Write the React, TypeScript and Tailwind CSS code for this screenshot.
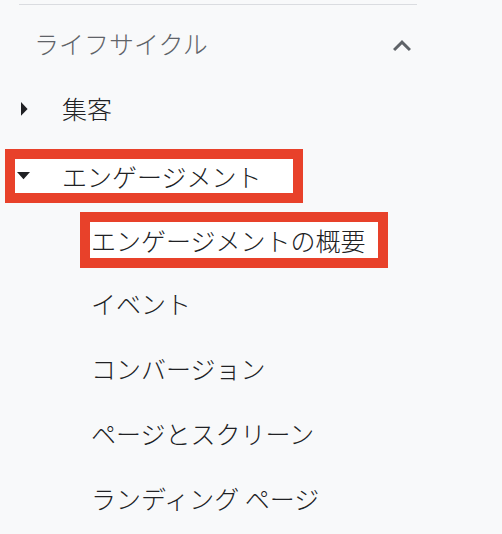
import React from "react";

function ChevronUp() {
  return (
    <svg width="36" height="36" viewBox="0 0 24 24" className="shrink-0 mt-[4px]">
      <path d="M12 8l-6 6 1.41 1.41L12 10.83l4.59 4.58L18 14z" fill="#5f6368" />
    </svg>
  );
}

function TriRight() {
  return (
    <svg width="7" height="14" viewBox="0 0 7 14" className="shrink-0 mt-[1px]">
      <polygon points="0,0 6.6,6.9 0,13.8" fill="#202124" />
    </svg>
  );
}

function TriDown() {
  return (
    <svg width="13" height="8" viewBox="0 0 13 8" className="shrink-0">
      <polygon points="0,0 13,0 6.5,7.2" fill="#202124" />
    </svg>
  );
}

const subItems = ["イベント", "コンバージョン", "ページとスクリーン", "ランディング ページ"];

export default function App() {
  return (
    <div className="w-[502px] h-[534px] bg-[#f8f9fa] overflow-hidden font-['Noto_Sans_CJK_JP','Noto_Sans',sans-serif] font-light text-[25px] leading-none text-[#202124]">
      <div className="pt-[4px]">
        <div className="ml-[19px] w-[398px] h-px bg-[#dadce0]" />
      </div>
      <div className="pt-[6px]">
        <div className="h-[65px] w-[420px] flex items-center pl-[34px]">
          <span className="flex-1 text-[#5f6368]">ライフサイクル</span>
          <ChevronUp />
        </div>
        <div className="h-[65px] flex items-center">
          <div className="w-[62px] pl-[21px] flex items-center">
            <TriRight />
          </div>
          <span>集客</span>
        </div>
        <div className="h-[65px] flex items-start pt-[8px]">
          <div className="ml-[5px] w-[298px] h-[54px] border-[10px] border-[#e8412a] bg-white flex items-center pl-[2px]">
            <TriDown />
            <span className="ml-[32px]">エンゲージメント</span>
          </div>
        </div>
        <div className="h-[65px] flex items-start pt-[6px]">
          <div className="ml-[80px] w-[308px] h-[56px] border-[10px] border-[#e8412a] bg-white flex items-center pl-[1px]">
            <span>エンゲージメントの概要</span>
          </div>
        </div>
        {subItems.map((t) => (
          <div key={t} className="h-[65px] flex items-center pl-[91px]">
            <span>{t}</span>
          </div>
        ))}
      </div>
    </div>
  );
}
